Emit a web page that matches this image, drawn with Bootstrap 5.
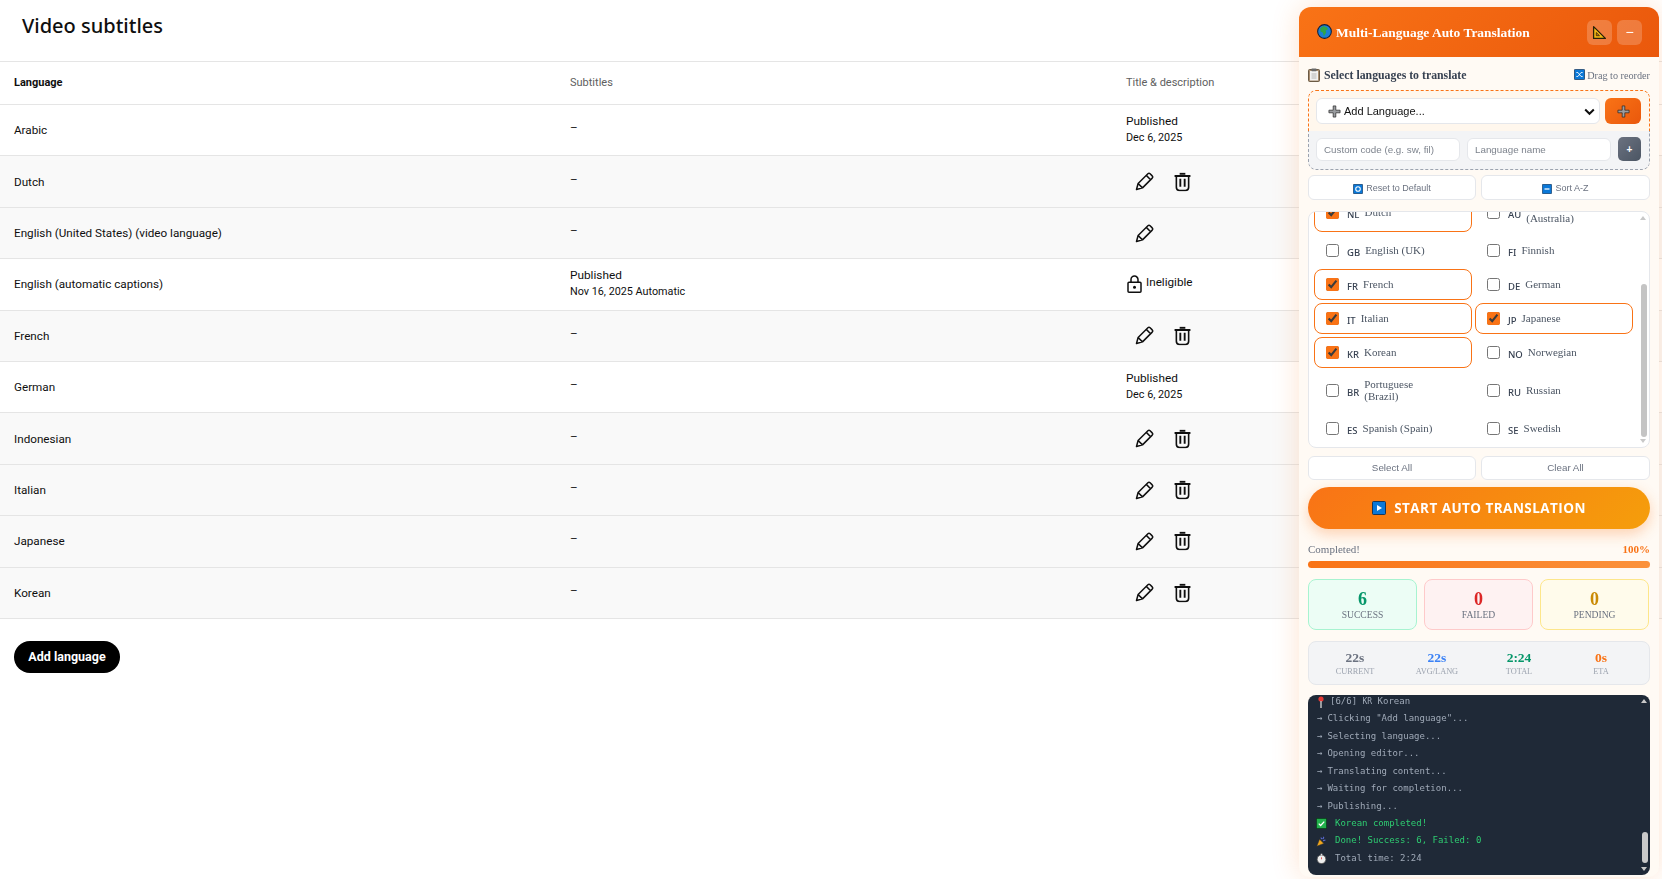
<!DOCTYPE html>
<html lang="en">
<head>
<meta charset="utf-8">
<title>Video subtitles</title>
<link href="https://cdn.jsdelivr.net/npm/bootstrap@5.3.0/dist/css/bootstrap.min.css" rel="stylesheet">
<style>
html,body{height:879px;overflow:hidden;background:#fff}
body{font-family:Roboto,sans-serif;font-size:12px;color:#0f0f0f}
.pg-title{font-family:"Noto Sans",sans-serif;font-weight:500;font-size:20px;line-height:28px;margin:0;padding:12px 22px 21px;height:61px}
.subs-table{width:1668px;table-layout:fixed;margin:0;font-size:11.7px;--bs-table-bg:transparent;border-top:1px solid #e5e5e5}
.subs-table th,.subs-table td{padding:0 14px;border-bottom:1px solid #e5e5e5;vertical-align:middle;color:#0f0f0f;line-height:16px}
.subs-table thead th{height:43px;font-size:11px;font-weight:400;color:#606060}
.subs-table thead th:first-child{font-weight:700;color:#0f0f0f}
.subs-table tbody tr{height:51.42px}
.row-gray td{background:#f9f9f9}
.dash{position:relative;top:-3px}
.stack-top{font-size:11.8px;line-height:16px;position:relative;top:-1px}
.stack-sub{font-size:10.8px;line-height:17px;position:relative;top:-1px}
.act-gap{display:flex;align-items:center;gap:20px;padding-left:9px}
.lock-row{display:flex;align-items:center;gap:4px;padding-left:1px}
.lock-row span{position:relative;top:-2px}
.add-pill{background:#000;color:#fff;border:0;border-radius:17px;font-family:Roboto,sans-serif;font-weight:700;font-size:12.5px;height:32px;width:106px;padding:0;margin:22px 0 0 14px;display:block}

.tr-panel{position:fixed;top:7px;left:1299px;width:360px;height:870px;background:#fffaf4;border-radius:12px 12px 10px 10px;box-shadow:0 0 28px rgba(249,115,22,.2);overflow:hidden;font-family:"Liberation Serif",serif}
.tr-head{height:50px;background:linear-gradient(135deg,#f97316,#ea580c);padding:0 17px 0 18px;display:flex;align-items:center;justify-content:space-between;color:#fff}
.tr-title{font-weight:700;font-size:13.45px;display:flex;align-items:center;gap:4px;white-space:nowrap}
.tr-title span{position:relative;top:1.5px}
.hd-btn{width:25px;height:25px;border-radius:6px;background:rgba(255,255,255,.2);display:flex;align-items:center;justify-content:center;color:#fff;font-family:"Liberation Sans",sans-serif;font-size:14px;line-height:1}
.tr-body{padding:9px 9px 0}
.sel-row{height:18px;display:flex;align-items:center;justify-content:space-between;margin-bottom:6px}
.sel-row span{position:relative;top:1px}
.sel-lbl{font-weight:700;font-size:11.8px;color:#374151;display:flex;align-items:center;gap:4px;white-space:nowrap}
.drag-lbl{font-size:10.2px;color:#6b7280;display:flex;align-items:center;gap:2px;white-space:nowrap}
.add-box{height:80px;border-radius:8px;overflow:hidden;margin-bottom:5px}
.add-top{height:41px;background:#fff7ed;border:1px dashed #f97316;border-bottom:0;border-radius:8px 8px 0 0;padding:7px 8px 0 7px;display:flex;gap:5px}
.add-low{height:39px;background:#f3f4f6;border:1px dashed #9ca3af;border-top:0;border-radius:0 0 8px 8px;padding:7px 8px 0 7px;display:flex;gap:7px}
.sel-fake{flex:1;height:26px;background:#fff;border:1px solid #e5e7eb;border-radius:6px;font-family:"Liberation Sans",sans-serif;font-size:11px;color:#111;display:flex;align-items:center;gap:3px;padding:1px 4px 0 11px}
.sel-fake .chev{margin-left:auto}
.org-btn{width:36px;height:26px;border-radius:6px;background:linear-gradient(135deg,#f97316,#ea580c);display:flex;align-items:center;justify-content:center}
.cust-in{width:144px;height:23px;background:#fff;border:1px solid #e5e7eb;border-radius:6px;font-family:"Liberation Sans",sans-serif;font-size:9.8px;padding:0 7px;outline:0}
.cust-in::placeholder{color:#7d838d;opacity:1}
.gray-btn{width:23px;height:24px;margin-top:-1px;border-radius:5px;background:linear-gradient(135deg,#6b7280,#4b5563);color:#fff;font:700 10px "Liberation Sans",sans-serif;display:flex;align-items:center;justify-content:center}
.two-btn{display:grid;grid-template-columns:168px 169px;gap:5px}
.lt-btn{height:25px;background:#fff;border:1px solid #e5e7eb;border-radius:6px;font-family:"Liberation Sans",sans-serif;font-size:9.8px;color:#6b7280;display:flex;align-items:center;justify-content:center;gap:3px;padding:0}
.lt-btn.tiny{font-size:9px;padding-top:2px}
.lang-wrap{position:relative;height:237px;margin:11px 0 8px;background:#fff;border:1px solid #e5e7eb;border-radius:8px;overflow:hidden}
.lang-grid{display:grid;grid-template-columns:158px 158px;gap:3px;padding-left:5px;margin-top:-19px}
.lang-it{border:1px solid transparent;border-radius:8px;min-height:31px;display:flex;align-items:center;padding:7px 6px 7px 11px;font-size:11px;line-height:11.5px;color:#4b5563;background:#fff;margin:0}
.lang-it.on{border-color:#f97316}
.lang-it input{margin:0 8px 0 0;width:13px;height:13px;flex:none;accent-color:#f97316}
.lang-code{font-family:"Noto Sans",sans-serif;font-size:9.5px;font-weight:500;color:#374151;margin-right:5px;position:relative;top:2px;flex:none}
.lang-name{max-width:76px}
.sb-thumb{position:absolute;background:#c4c4c4;border-radius:3px;right:2px;width:6px}
.sb-up,.sb-dn{position:absolute;right:3px;width:0;height:0;border-left:3px solid transparent;border-right:3px solid transparent}
.sb-up{border-bottom:4px solid #c8c8c8;top:4px}
.sb-dn{border-top:4px solid #c8c8c8;bottom:4px}
.start-btn{height:42px;margin-top:7px;width:342px;border-radius:21px;background:linear-gradient(135deg,#f97316,#f59e0b);color:#fff;font-family:"Open Sans",sans-serif;font-weight:700;font-size:13.5px;letter-spacing:.45px;display:flex;align-items:center;justify-content:center;gap:8px;box-shadow:0 5px 14px rgba(249,115,22,.3)}
.prog-row{display:flex;justify-content:space-between;height:15px;margin-top:13px;font-size:11px;line-height:15px;color:#6b7280}
.prog-row b{color:#f97316}
.prog-track{height:7px;margin-top:4px;border-radius:4px;background:linear-gradient(90deg,#f97316,#fb923c)}
.stat-grid{display:grid;grid-template-columns:repeat(3,109px);gap:7px;margin-top:11px}
.stat-c{height:51px;border-radius:8px;border:1px solid;text-align:center;padding-top:10px}
.stat-c b{display:block;font-size:18px;line-height:19px}
.stat-c span{display:block;font-size:9.6px;line-height:12px;color:#6b7280}
.st-ok{background:#ecfdf5;border-color:#a7f3d0}.st-ok b{color:#059669}
.st-bad{background:#fef2f2;border-color:#fecaca}.st-bad b{color:#dc2626}
.st-wait{background:#fffbeb;border-color:#fde68a}.st-wait b{color:#ca8a04}
.time-box{height:44px;margin-top:11px;background:#f3f4f6;border:1px solid #e5e7eb;border-radius:8px;display:grid;grid-template-columns:repeat(4,82px);padding:8px 5px 0;text-align:center}
.time-box b{display:block;font-size:13.5px;line-height:16px}
.time-box span{display:block;font-size:8.3px;line-height:11px;color:#9ca3af}
.log-box{position:relative;height:180px;margin-top:10px;background:#1f2937;border-radius:8px;overflow:hidden;padding:0 8px;font-family:"DejaVu Sans Mono",monospace;font-size:9px;color:#a0aab8;line-height:17.43px;white-space:nowrap}
.log-box div{display:flex;align-items:center;height:17.43px}
.log-box svg{margin-right:8px;flex:none}
.log-good{color:#2ecc71}
.log-arw{margin:0 5px 0 1px}
.code-sm{font-size:8px}
</style>
</head>
<body>
<h1 class="pg-title">Video subtitles</h1>
<table class="table subs-table">
<colgroup><col style="width:556px"><col style="width:556px"><col></colgroup>
<thead><tr><th>Language</th><th>Subtitles</th><th>Title &amp; description</th></tr></thead>
<tbody>
<tr><td>Arabic</td><td><span class="dash">–</span></td><td><div class="stack-top">Published</div><div class="stack-sub">Dec 6, 2025</div></td></tr>
<tr class="row-gray"><td>Dutch</td><td><span class="dash">–</span></td><td><div class="act-gap"><svg width="19" height="19" viewBox="0 0 19 19"><use href="#ic-pen"/></svg><svg width="17" height="20" viewBox="0 0 18 20"><use href="#ic-bin"/></svg></div></td></tr>
<tr class="row-gray"><td>English (United States) (video language)</td><td><span class="dash">–</span></td><td><div class="act-gap"><svg width="19" height="19" viewBox="0 0 19 19"><use href="#ic-pen"/></svg></div></td></tr>
<tr><td>English (automatic captions)</td><td><div class="stack-top">Published</div><div class="stack-sub">Nov 16, 2025 Automatic</div></td><td><div class="lock-row"><svg width="15" height="18" viewBox="0 0 15 18"><use href="#ic-lock"/></svg><span>Ineligible</span></div></td></tr>
<tr class="row-gray"><td>French</td><td><span class="dash">–</span></td><td><div class="act-gap"><svg width="19" height="19" viewBox="0 0 19 19"><use href="#ic-pen"/></svg><svg width="17" height="20" viewBox="0 0 18 20"><use href="#ic-bin"/></svg></div></td></tr>
<tr><td>German</td><td><span class="dash">–</span></td><td><div class="stack-top">Published</div><div class="stack-sub">Dec 6, 2025</div></td></tr>
<tr class="row-gray"><td>Indonesian</td><td><span class="dash">–</span></td><td><div class="act-gap"><svg width="19" height="19" viewBox="0 0 19 19"><use href="#ic-pen"/></svg><svg width="17" height="20" viewBox="0 0 18 20"><use href="#ic-bin"/></svg></div></td></tr>
<tr class="row-gray"><td>Italian</td><td><span class="dash">–</span></td><td><div class="act-gap"><svg width="19" height="19" viewBox="0 0 19 19"><use href="#ic-pen"/></svg><svg width="17" height="20" viewBox="0 0 18 20"><use href="#ic-bin"/></svg></div></td></tr>
<tr class="row-gray"><td>Japanese</td><td><span class="dash">–</span></td><td><div class="act-gap"><svg width="19" height="19" viewBox="0 0 19 19"><use href="#ic-pen"/></svg><svg width="17" height="20" viewBox="0 0 18 20"><use href="#ic-bin"/></svg></div></td></tr>
<tr class="row-gray"><td>Korean</td><td><span class="dash">–</span></td><td><div class="act-gap"><svg width="19" height="19" viewBox="0 0 19 19"><use href="#ic-pen"/></svg><svg width="17" height="20" viewBox="0 0 18 20"><use href="#ic-bin"/></svg></div></td></tr>
</tbody>
</table>
<button class="add-pill" type="button">Add language</button>

<svg width="0" height="0" class="position-absolute">
<defs>
<symbol id="ic-pen" viewBox="0 0 19 19"><path d="M1.5 17.5l1.6-6L12.9 1.8a1.6 1.6 0 0 1 2.2 0l2.1 2.1a1.6 1.6 0 0 1 0 2.2L7.5 15.9zM3.1 11.5l4.4 4.4M11.3 3.4l4.3 4.3" fill="none" stroke="#0f0f0f" stroke-width="1.5" stroke-linejoin="round"/></symbol>
<symbol id="ic-bin" viewBox="0 0 18 20"><path d="M6 1.2h6M.6 3.6h16.8" stroke="#0f0f0f" stroke-width="2" fill="none"/><path d="M2.5 4v11.6A3.4 3.4 0 0 0 5.9 19h6.2a3.4 3.4 0 0 0 3.4-3.4V4" fill="none" stroke="#0f0f0f" stroke-width="1.7"/><path d="M6.7 6.5v8.5M11.3 6.5v8.5" stroke="#0f0f0f" stroke-width="2"/></symbol>
<symbol id="ic-lock" viewBox="0 0 15 18"><path d="M4 7.5V4.6a3.5 3.5 0 0 1 7 0v2.9" fill="none" stroke="#0f0f0f" stroke-width="1.5"/><rect x="1" y="7.2" width="13" height="10" rx="1" fill="none" stroke="#0f0f0f" stroke-width="1.5"/><circle cx="7.5" cy="12.2" r="1.5" fill="#0f0f0f"/></symbol>
<symbol id="ic-plus" viewBox="0 0 14 14"><path d="M5.6 1h2.8v4.6H13v2.8H8.4V13H5.6V8.4H1V5.6h4.6z" fill="#9a9da1" stroke="#2a2a2a" stroke-width=".8"/></symbol>
<symbol id="ic-blue" viewBox="0 0 14 14"><rect x=".5" y=".5" width="13" height="13" rx="1" fill="#0a78d8" stroke="#15365a"/></symbol>
</defs>
</svg>

<aside class="tr-panel">
  <div class="tr-head">
    <div class="tr-title">
      <svg width="15" height="15" viewBox="0 0 14 14"><circle cx="7" cy="7" r="6.4" fill="#1b7fd6" stroke="#10203a"/><path d="M3 4l3-2.2 3 1.2 1.4 2-2.4 1 .6 2L6.5 11.5 5.4 8 3.4 7z" fill="#2fa34a"/></svg>
      <span>Multi-Language Auto Translation</span>
    </div>
    <div class="d-flex" style="column-gap:5px">
      <div class="hd-btn"><svg width="15" height="15" viewBox="0 0 14 14"><path d="M1.5 1.5v11h11z" fill="#f5b914" stroke="#2a2208" stroke-width="1.2" stroke-linejoin="round"/><path d="M4 7v3h3z" fill="#c9701b" stroke="#2a2208" stroke-width=".7"/></svg></div>
      <div class="hd-btn">−</div>
    </div>
  </div>
  <div class="tr-body">
    <div class="sel-row">
      <div class="sel-lbl"><svg width="12" height="14" viewBox="0 0 12 14"><rect x=".5" y="1.5" width="11" height="12" rx="1" fill="#a88d6f" stroke="#6b5a45"/><rect x="2" y="3" width="8" height="9.5" fill="#f2f2f2"/><rect x="3.4" y=".4" width="5.2" height="2.8" rx=".6" fill="#6a6a6a"/><path d="M3.5 6h5M3.5 8h5M3.5 10h5" stroke="#a5a5a5" stroke-width=".8"/></svg><span>Select languages to translate</span></div>
      <div class="drag-lbl"><svg width="11" height="11" viewBox="0 0 14 14"><use href="#ic-blue"/><path d="M3 4.5h2l4 5h2M3 9.5h2l4-5h2" stroke="#fff" stroke-width="1.1" fill="none"/></svg><span>Drag to reorder</span></div>
    </div>
    <div class="add-box">
      <div class="add-top">
        <div class="sel-fake"><svg width="13" height="13" viewBox="0 0 14 14"><use href="#ic-plus"/></svg><span>Add Language...</span><svg class="chev" width="11" height="8" viewBox="0 0 11 8"><path d="M1.2 1.5l4.3 4.3 4.3-4.3" fill="none" stroke="#111" stroke-width="2"/></svg></div>
        <div class="org-btn"><svg width="13" height="13" viewBox="0 0 14 14"><use href="#ic-plus"/></svg></div>
      </div>
      <div class="add-low">
        <input class="cust-in" type="text" placeholder="Custom code (e.g. sw, fil)">
        <input class="cust-in" type="text" placeholder="Language name">
        <div class="gray-btn">+</div>
      </div>
    </div>
    <div class="two-btn">
      <div class="lt-btn tiny"><svg width="10" height="10" viewBox="0 0 14 14"><use href="#ic-blue"/><circle cx="7" cy="7" r="3.2" fill="none" stroke="#fff" stroke-width="1.5"/></svg><span>Reset to Default</span></div>
      <div class="lt-btn tiny"><svg width="10" height="10" viewBox="0 0 14 14"><use href="#ic-blue"/><path d="M3.5 7h7" stroke="#fff" stroke-width="1.8"/></svg><span>Sort A-Z</span></div>
    </div>
    <div class="lang-wrap">
      <div class="lang-grid">
        <label class="lang-it on"><input type="checkbox" checked><span class="lang-code">NL</span><span class="lang-name">Dutch</span></label>
        <label class="lang-it"><input type="checkbox"><span class="lang-code">AU</span><span class="lang-name">English (Australia)</span></label>
        <label class="lang-it"><input type="checkbox"><span class="lang-code">GB</span><span class="lang-name">English (UK)</span></label>
        <label class="lang-it"><input type="checkbox"><span class="lang-code">FI</span><span class="lang-name">Finnish</span></label>
        <label class="lang-it on"><input type="checkbox" checked><span class="lang-code">FR</span><span class="lang-name">French</span></label>
        <label class="lang-it"><input type="checkbox"><span class="lang-code">DE</span><span class="lang-name">German</span></label>
        <label class="lang-it on"><input type="checkbox" checked><span class="lang-code">IT</span><span class="lang-name">Italian</span></label>
        <label class="lang-it on"><input type="checkbox" checked><span class="lang-code">JP</span><span class="lang-name">Japanese</span></label>
        <label class="lang-it on"><input type="checkbox" checked><span class="lang-code">KR</span><span class="lang-name">Korean</span></label>
        <label class="lang-it"><input type="checkbox"><span class="lang-code">NO</span><span class="lang-name">Norwegian</span></label>
        <label class="lang-it"><input type="checkbox"><span class="lang-code">BR</span><span class="lang-name">Portuguese (Brazil)</span></label>
        <label class="lang-it"><input type="checkbox"><span class="lang-code">RU</span><span class="lang-name">Russian</span></label>
        <label class="lang-it"><input type="checkbox"><span class="lang-code">ES</span><span class="lang-name">Spanish (Spain)</span></label>
        <label class="lang-it"><input type="checkbox"><span class="lang-code">SE</span><span class="lang-name">Swedish</span></label>
      </div>
      <i class="sb-up"></i><i class="sb-thumb" style="top:72px;height:153px"></i><i class="sb-dn"></i>
    </div>
    <div class="two-btn">
      <div class="lt-btn" style="height:24px">Select All</div>
      <div class="lt-btn" style="height:24px">Clear All</div>
    </div>
    <div class="start-btn"><svg width="14" height="14" viewBox="0 0 14 14"><use href="#ic-blue"/><path d="M5 4l5 3-5 3z" fill="#fff"/></svg><span>START AUTO TRANSLATION</span></div>
    <div class="prog-row"><span>Completed!</span><b>100%</b></div>
    <div class="prog-track"></div>
    <div class="stat-grid">
      <div class="stat-c st-ok"><b>6</b><span>SUCCESS</span></div>
      <div class="stat-c st-bad"><b>0</b><span>FAILED</span></div>
      <div class="stat-c st-wait"><b>0</b><span>PENDING</span></div>
    </div>
    <div class="time-box">
      <div><b style="color:#6b7280">22s</b><span>CURRENT</span></div>
      <div><b style="color:#3b82f6">22s</b><span>AVG/LANG</span></div>
      <div><b style="color:#059669">2:24</b><span>TOTAL</span></div>
      <div><b style="color:#f97316">0s</b><span>ETA</span></div>
    </div>
    <div class="log-box">
      <div style="margin-top:-2px"><svg style="margin:0 5px 0 1px" width="8" height="12" viewBox="0 0 8 12"><circle cx="4" cy="3" r="2.6" fill="#e53935"/><path d="M4 5v7" stroke="#ccc" stroke-width="1.4"/></svg><span>[6/6] <span class="code-sm">KR</span> Korean</span></div>
      <div><span class="log-arw">→</span><span>Clicking "Add language"...</span></div>
      <div><span class="log-arw">→</span><span>Selecting language...</span></div>
      <div><span class="log-arw">→</span><span>Opening editor...</span></div>
      <div><span class="log-arw">→</span><span>Translating content...</span></div>
      <div><span class="log-arw">→</span><span>Waiting for completion...</span></div>
      <div><span class="log-arw">→</span><span>Publishing...</span></div>
      <div class="log-good"><svg width="11" height="11" viewBox="0 0 14 14"><rect x=".5" y=".5" width="13" height="13" fill="#22b14c" stroke="#0c3d1c"/><path d="M3.5 7.2l2.4 2.4 4.6-5" fill="none" stroke="#fff" stroke-width="1.6"/></svg><span>Korean completed!</span></div>
      <div class="log-good"><svg width="11" height="11" viewBox="0 0 14 14"><path d="M1 13l3.5-9 5.5 5.5z" fill="#f2a71b" stroke="#333" stroke-width=".7"/><path d="M6 2l2 2M10 1l-1 3M12 5l-3 1" stroke="#5b6bd5" stroke-width="1.3"/></svg><span>Done! Success: 6, Failed: 0</span></div>
      <div><svg width="11" height="11" viewBox="0 0 14 14"><circle cx="7" cy="8" r="5.5" fill="#eee" stroke="#555"/><path d="M7 1v2" stroke="#ddd" stroke-width="2"/><path d="M7 8V5.5" stroke="#d33" stroke-width="1"/></svg><span>Total time: 2:24</span></div>
      <i class="sb-up"></i><i class="sb-thumb" style="top:137px;height:31px;background:#c9c9c9"></i><i class="sb-dn"></i>
    </div>
  </div>
</aside>
</body>
</html>
